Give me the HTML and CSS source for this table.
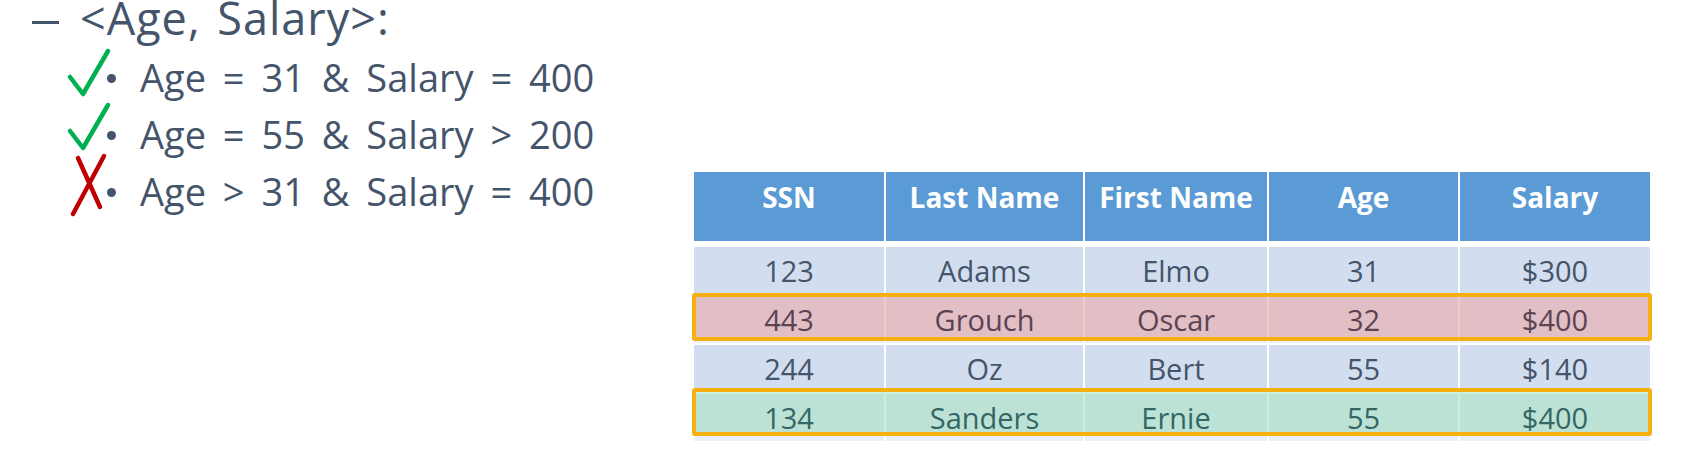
FILE: index.html
```html
<!DOCTYPE html>
<html lang="en">
<head>
<meta charset="utf-8">
<title>&lt;Age, Salary&gt;</title>
<link rel="stylesheet" href="styles.css">
</head>
<body>
<main class="slide">
  <section class="notes">
    <p class="title"><span class="dash" aria-hidden="true"></span><span class="title-text">&lt;Age, Salary&gt;:</span></p>
    <ul class="conds">
      <li class="cond">
        <svg class="mark" viewBox="0 0 38 57" width="38" height="57" aria-hidden="true"><path class="check" d="M2 28 L15 45 L40 2"/></svg>
        <span class="dot"></span>
        <span class="cond-text">Age = 31 &amp; Salary = 400</span>
      </li>
      <li class="cond">
        <svg class="mark mark-up" viewBox="0 0 38 57" width="38" height="57" aria-hidden="true"><path class="check" d="M2 28 L15 45 L40 2"/></svg>
        <span class="dot"></span>
        <span class="cond-text">Age = 55 &amp; Salary &gt; 200</span>
      </li>
      <li class="cond">
        <svg class="mark" viewBox="0 0 38 57" width="38" height="57" aria-hidden="true"><path class="cross" d="M36 -7 L5 51 M10 -5 L32 44"/></svg>
        <span class="dot"></span>
        <span class="cond-text">Age &gt; 31 &amp; Salary = 400</span>
      </li>
    </ul>
  </section>

  <section class="table-wrap">
    <table class="grid">
      <colgroup>
        <col class="c-ssn"><col class="c-last"><col class="c-first"><col class="c-age"><col class="c-sal">
      </colgroup>
      <thead>
        <tr><th>SSN</th><th>Last Name</th><th>First Name</th><th>Age</th><th>Salary</th></tr>
      </thead>
      <tbody>
        <tr class="odd"><td>123</td><td>Adams</td><td>Elmo</td><td>31</td><td>$300</td></tr>
        <tr class="even"><td>443</td><td>Grouch</td><td>Oscar</td><td>32</td><td>$400</td></tr>
        <tr class="odd"><td>244</td><td>Oz</td><td>Bert</td><td>55</td><td>$140</td></tr>
        <tr class="even"><td>134</td><td>Sanders</td><td>Ernie</td><td>55</td><td>$400</td></tr>
      </tbody>
    </table>
    <div class="hl hl-red" aria-hidden="true"></div>
    <div class="hl hl-green" aria-hidden="true"></div>
  </section>
</main>
</body>
</html>
```

FILE: styles.css
```css
* { box-sizing: border-box; }

html, body {
  margin: 0;
  padding: 0;
  background: #ffffff;
}

body {
  width: 1681px;
  height: 465px;
  overflow: hidden;
  font-family: "Open Sans", "Noto Sans", sans-serif;
  color: #44546a;
}

.slide {
  display: flex;
  align-items: flex-start;
}

/* ---------- left notes ---------- */
.notes {
  flex: 0 0 692px;
}

.title {
  margin: 0;
  height: 36px;
  display: flex;
  align-items: flex-start;
  font-size: 45px;
  line-height: 36px;
  letter-spacing: 1px;
  word-spacing: 4px;
  white-space: nowrap;
}

.dash {
  flex: 0 0 27px;
  height: 3px;
  margin: 21px 0 0 32px;
  background: #44546a;
}

.title-text {
  margin-left: 21px;
}

.conds {
  list-style: none;
  margin: 13px 0 0;
  padding: 0 0 0 68px;
}

.cond {
  display: flex;
  align-items: flex-start;
  height: 57px;
  font-size: 38px;
  line-height: 57px;
  word-spacing: 7px;
  white-space: nowrap;
}

.mark {
  flex: 0 0 38px;
  overflow: visible;
}

.mark-up {
  margin-top: -3px;
}

.check {
  fill: none;
  stroke: #00b050;
  stroke-width: 4.5;
  stroke-linecap: round;
  stroke-linejoin: round;
}

.cross {
  fill: none;
  stroke: #c00000;
  stroke-width: 4.5;
  stroke-linecap: round;
}

.dot {
  flex: 0 0 9px;
  height: 9px;
  margin: 25px 0 0 1px;
  border-radius: 50%;
  background: #44546a;
}

.cond-text {
  margin-left: 24px;
}

/* ---------- table ---------- */
.table-wrap {
  position: relative;
  margin-top: 170px;
}

.grid {
  border-collapse: separate;
  border-spacing: 2px;
  table-layout: fixed;
  width: 960px;
}

.c-ssn { width: 190px; }
.c-last { width: 197px; }
.c-first { width: 182px; }
.c-age { width: 189px; }
.c-sal { width: 190px; }

.grid th {
  height: 73px;
  padding: 5px 0 0;
  border-bottom: 4px solid #ffffff;
  background: #5b9bd5;
  color: #ffffff;
  font-size: 28px;
  line-height: 40px;
  font-weight: 700;
  text-align: center;
  vertical-align: top;
}

.grid td {
  height: 47px;
  padding: 0;
  font-size: 29px;
  line-height: 40px;
  text-align: center;
  vertical-align: middle;
  color: #44546a;
}

.odd td { background: #d2deef; }
.even td { background: #eaeff7; }

.hl {
  position: absolute;
  left: 0;
  width: 960px;
  height: 48px;
  border: 4px solid #f5b00f;
  border-radius: 3px;
}

.hl-red {
  top: 123px;
  background: rgba(192, 0, 0, 0.2);
}

.hl-green {
  top: 218px;
  background: rgba(0, 176, 80, 0.2);
}
```
